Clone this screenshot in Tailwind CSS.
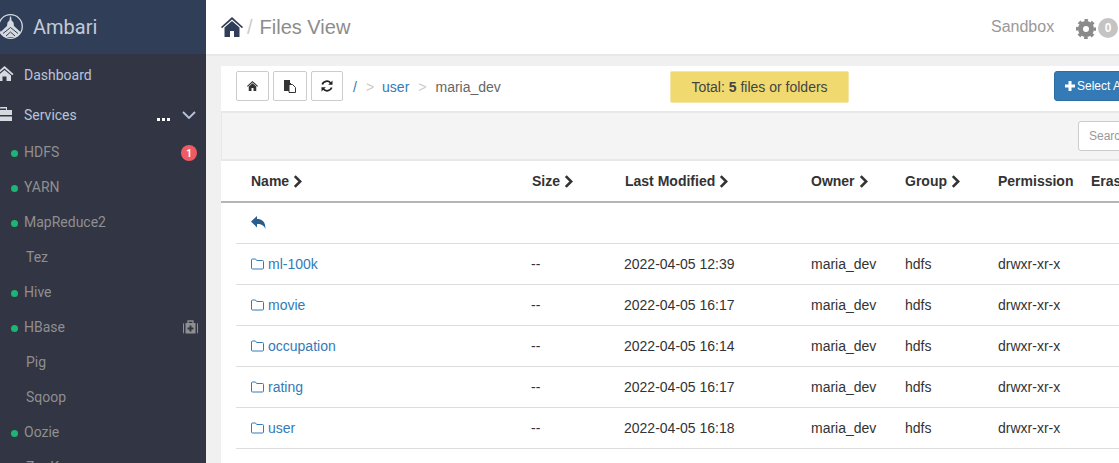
<!DOCTYPE html>
<html lang="en">
<head>
    <meta charset="UTF-8">
    <title>Ambari - Files View</title>
    <script src="https://cdn.jsdelivr.net/npm/@tailwindcss/browser@4"></script>
</head>
<body class="overflow-hidden">
<div class="flex w-[1119px] h-[463px] overflow-hidden bg-[#f0f0f0] font-['Liberation_Sans',sans-serif] text-[14px] text-[#333]">

    <!-- sidebar -->
    <aside class="w-[206px] shrink-0 bg-[#323544] font-['Roboto',sans-serif] overflow-hidden">
        <div class="h-[54px] bg-[#303e57] flex items-center pl-[33px] relative">
            <svg class="absolute left-[-3px] top-[13px]" width="27" height="27" viewBox="0 0 27 27">
                <circle cx="13.500" cy="13.500" r="11.800" fill="none" stroke="#d5d9e0" stroke-width="1.300"/>
                <path d="M13 3.500h1l.6 4 1.900 2 .5 3.500 7 6.500-4 4.500H7l-4-4.500 7-6.500.5-3.500 1.900-2z" fill="#d5d9e0"/>
                <path d="M6 20.500l7.500-6 7.500 6M9 23l4.500-4 4.500 4" fill="none" stroke="#303e57" stroke-width="1"/>
            </svg>
            <span class="text-[20px] text-[#c3cad6]">Ambari</span>
        </div>
        <div class="h-[42px] flex items-center pl-[24px] relative text-[#b8c4da]">
            <svg class="absolute left-[-5px] top-[11px]" width="19" height="17" viewBox="0 0 19 17" fill="#d5d9e0"><path d="M9.500 1L18.500 9l-1.200 1.200L9.500 3.500 1.700 10.200.5 9zM3 10.500l6.500-5.500 6.500 5.500V16h-4.500v-4.500h-4V16H3z"/></svg>
            Dashboard
        </div>
        <div class="h-[39px] flex items-center pl-[24px] relative text-[#b8c4da]">
            <svg class="absolute left-[-5px] top-[10px]" width="19" height="17" viewBox="0 0 19 17" fill="#d5d9e0"><path d="M6 1h6v3h5v5H0V4h3V1.500zM5 2.500V4h6V2.500zM0 10.500h17V15H0z"/></svg>
            Services
            <span class="absolute left-[157px] top-[22px] flex gap-[2px]"><i class="w-[3px] h-[3px] bg-white"></i><i class="w-[3px] h-[3px] bg-white"></i><i class="w-[3px] h-[3px] bg-white"></i></span>
            <svg class="absolute left-[182px] top-[15px]" width="14" height="9" viewBox="0 0 14 9" fill="none" stroke="#b8c4da" stroke-width="1.800"><path d="M1 1l6 6 6-6"/></svg>
        </div>
        <ul class="text-[#8f8f8f]">
            <li class="h-[35px] flex items-center pl-[24px] relative">
                <i class="absolute left-[11px] top-[15px] w-[7px] h-[7px] rounded-full bg-[#1eb475]"></i>HDFS
                <span class="absolute left-[181px] top-[10px] w-4 h-4 rounded-full bg-[#ef5b63] text-white text-[10px] font-bold flex items-center justify-center">1</span>
            </li>
            <li class="h-[35px] flex items-center pl-[24px] relative"><i class="absolute left-[11px] top-[15px] w-[7px] h-[7px] rounded-full bg-[#1eb475]"></i>YARN</li>
            <li class="h-[35px] flex items-center pl-[24px] relative"><i class="absolute left-[11px] top-[15px] w-[7px] h-[7px] rounded-full bg-[#1eb475]"></i>MapReduce2</li>
            <li class="h-[35px] flex items-center pl-[26px]">Tez</li>
            <li class="h-[35px] flex items-center pl-[24px] relative"><i class="absolute left-[11px] top-[15px] w-[7px] h-[7px] rounded-full bg-[#1eb475]"></i>Hive</li>
            <li class="h-[35px] flex items-center pl-[24px] relative">
                <i class="absolute left-[11px] top-[15px] w-[7px] h-[7px] rounded-full bg-[#1eb475]"></i>HBase
                <svg class="absolute left-[183px] top-[10px]" width="15" height="14" viewBox="0 0 15 14"><path d="M5 3V1h5v2" fill="none" stroke="#8f8f8f" stroke-width="1.300"/><path d="M0 4.500Q0 3 1 3v10.500q-1 0-1-1.500zM2.500 3h10v10.500h-10zM14 3q1 0 1 1.500V12q0 1.500-1 1.500z" fill="#8f8f8f"/><path d="M6.500 5.500h2v2h2v2h-2v2h-2v-2h-2v-2h2z" fill="#323544"/></svg>
            </li>
            <li class="h-[35px] flex items-center pl-[26px]">Pig</li>
            <li class="h-[35px] flex items-center pl-[26px]">Sqoop</li>
            <li class="h-[35px] flex items-center pl-[24px] relative"><i class="absolute left-[11px] top-[15px] w-[7px] h-[7px] rounded-full bg-[#1eb475]"></i>Oozie</li>
            <li class="h-[35px] flex items-center pl-[26px]">ZooKeeper</li>
        </ul>
    </aside>

    <!-- main -->
    <main class="flex-1 min-w-0">
        <header class="h-[56px] bg-white border-b-2 border-[#e8e8e8] flex items-center pl-[15px] relative">
            <svg width="22" height="20" viewBox="0 0 22 20" fill="#303e57"><path d="M11 0l11 10-1 1.300L11 2.500 1 11.300 0 10z"/><path d="M3.500 10.500L11 4l7.500 6.500V20H13v-6H9v6H3.500z"/></svg>
            <span class="text-[#ccc] text-[20px] ml-[4px]">/</span>
            <span class="text-[20px] text-[#8c8c8c] ml-[7px]">Files View</span>
            <span class="absolute left-[785px] top-[15px] text-[16px] text-[#999]">Sandbox</span>
            <svg class="absolute left-[870px] top-[19px]" width="20" height="20" viewBox="0 0 20 20" fill="none" stroke="#8a8a8a">
                <circle cx="10" cy="10" r="5.500" stroke-width="5"/>
                <circle cx="10" cy="10" r="8.700" stroke-width="2.600" stroke-dasharray="3.600 3.230" stroke-dashoffset="1.800"/>
            </svg>
            <span class="absolute left-[892px] top-[18px] w-5 h-5 rounded-full bg-[#c4c4c4] text-white text-[12px] font-bold flex items-center justify-center">0</span>
        </header>

        <section class="mt-[10px] ml-[15px] bg-white h-[397px] w-[920px]">
            <!-- toolbar -->
            <div class="h-[47px] flex items-start pt-[5px] pl-[15px] relative border-b-2 border-[#e8e8e8]">
                <button class="w-[33px] h-[30px] border border-[#ccc] rounded-[2px] flex items-center justify-center">
                    <svg width="11" height="10" viewBox="0 0 22 20" fill="#333"><path d="M11 0l11 10-1.500 1.700L11 3 1.500 11.700 0 10z"/><path d="M3.500 11L11 4.500l7.500 6.500v9H13v-6H9v6H3.500z"/></svg>
                </button>
                <button class="w-[34px] h-[30px] border border-[#ccc] rounded-[2px] flex items-center justify-center ml-[4px]">
                    <svg width="12" height="13" viewBox="0 0 12 13"><path d="M0 0h6v3h1v8H0z" fill="#333"/><path d="M5 4.500h3.500L11.500 7.500V12.500H5z" fill="#fff" stroke="#333"/></svg>
                </button>
                <button class="w-[32px] h-[30px] border border-[#ccc] rounded-[2px] flex items-center justify-center ml-[4px]">
                    <svg width="12" height="12" viewBox="0 0 12 12" fill="none" stroke="#222" stroke-width="1.800"><path d="M1.300 4.500A4.800 4.800 0 0 1 9.600 3"/><path d="M10.700 7.500A4.800 4.800 0 0 1 2.400 9"/><path d="M11.500 0.500v4.300H7.200z" fill="#222" stroke="none"/><path d="M0.500 11.500V7.200h4.300z" fill="#222" stroke="none"/></svg>
                </button>
                <div class="h-[32px] flex items-center">
                    <span class="ml-[10px] text-[#337ab7]">/</span>
                    <span class="ml-[9px] text-[#ccc]">&gt;</span>
                    <span class="ml-[8px] text-[#337ab7]">user</span>
                    <span class="ml-[9px] text-[#ccc]">&gt;</span>
                    <span class="ml-[9px] text-[#666]">maria_dev</span>
                </div>
                <div class="absolute left-[449px] top-[5px] w-[179px] h-[32px] rounded-[2px] bg-[#f0da70] border border-[#f5e6a8] flex items-center justify-center text-[#444]"><span>Total: <b>5</b> files or folders</span></div>
                <button class="absolute left-[833px] top-[5px] w-[100px] h-[30px] bg-[#337ab7] border border-[#2e6da4] rounded-[3px] text-white text-[12px] whitespace-nowrap text-left pl-[10px] overflow-hidden">
                    <span class="inline-flex items-center gap-[2px]"><svg width="10" height="10" viewBox="0 0 10 10" fill="#fff"><path d="M3.500 0h3v3.500H10v3H6.500V10h-3V6.500H0v-3h3.500z"/></svg>Select All</span>
                </button>
            </div>
            <!-- search bar -->
            <div class="h-[48px] bg-[#f4f4f4] border-b-2 border-[#e8e8e8] border-l border-l-[#e8e8e8] relative">
                <input class="absolute left-[856px] top-[8px] w-[100px] h-[30px] bg-white border border-[#ccc] rounded-[3px] pl-[10px] text-[12px] placeholder:text-[#999]" placeholder="Search">
            </div>
            <!-- table -->
            <div class="h-[42px] border-b-2 border-[#b5b5b5] grid grid-cols-[296px_93px_186px_94px_93px_93px_100px] items-center font-bold text-[#333]">
                <span class="pl-[30px] flex items-center gap-[4px]">Name <svg width="9" height="13" viewBox="0 0 8 12" fill="none" stroke="#333" stroke-width="2.400"><path d="M1.500 1l5 5-5 5"/></svg></span>
                <span class="pl-[15px] flex items-center gap-[4px]">Size <svg width="9" height="13" viewBox="0 0 8 12" fill="none" stroke="#333" stroke-width="2.400"><path d="M1.500 1l5 5-5 5"/></svg></span>
                <span class="pl-[15px] flex items-center gap-[4px] whitespace-nowrap">Last Modified <svg width="9" height="13" viewBox="0 0 8 12" fill="none" stroke="#333" stroke-width="2.400"><path d="M1.500 1l5 5-5 5"/></svg></span>
                <span class="pl-[15px] flex items-center gap-[4px]">Owner <svg width="9" height="13" viewBox="0 0 8 12" fill="none" stroke="#333" stroke-width="2.400"><path d="M1.500 1l5 5-5 5"/></svg></span>
                <span class="pl-[15px] flex items-center gap-[4px]">Group <svg width="9" height="13" viewBox="0 0 8 12" fill="none" stroke="#333" stroke-width="2.400"><path d="M1.500 1l5 5-5 5"/></svg></span>
                <span class="pl-[15px]">Permission</span>
                <span class="pl-[15px]">Erase</span>
            </div>
            <div class="ml-[15px]">
                <div class="h-[41px] border-b border-[#ddd] flex items-center pl-[15px] pb-[2px]">
                    <svg width="15" height="13" viewBox="0 0 15 13" fill="#2a5d8c"><path d="M6 0v3c5 0 8.500 2.500 8.500 10-1.500-3.500-3.500-5-8.500-5v3.500L0 5.500z"/></svg>
                </div>
                <div class="h-[41px] border-b border-[#ddd] grid grid-cols-[280px_93px_187px_94px_93px_93px] items-center">
                    <a class="pl-[15px] flex items-center gap-[4px] text-[#337ab7]"><svg width="13" height="12" viewBox="0 0 13 12" fill="none" stroke="#337ab7"><path d="M.5 10V2q0-1 1-1h3l1.200 1.500H11.500q1 0 1 1V10q0 1-1 1h-10q-1 0-1-1z"/></svg>ml-100k</a>
                    <span class="pl-[15px]">--</span><span class="pl-[15px]">2022-04-05 12:39</span><span class="pl-[15px]">maria_dev</span><span class="pl-[15px]">hdfs</span><span class="pl-[15px]">drwxr-xr-x</span>
                </div>
                <div class="h-[41px] border-b border-[#ddd] grid grid-cols-[280px_93px_187px_94px_93px_93px] items-center">
                    <a class="pl-[15px] flex items-center gap-[4px] text-[#337ab7]"><svg width="13" height="12" viewBox="0 0 13 12" fill="none" stroke="#337ab7"><path d="M.5 10V2q0-1 1-1h3l1.200 1.500H11.500q1 0 1 1V10q0 1-1 1h-10q-1 0-1-1z"/></svg>movie</a>
                    <span class="pl-[15px]">--</span><span class="pl-[15px]">2022-04-05 16:17</span><span class="pl-[15px]">maria_dev</span><span class="pl-[15px]">hdfs</span><span class="pl-[15px]">drwxr-xr-x</span>
                </div>
                <div class="h-[41px] border-b border-[#ddd] grid grid-cols-[280px_93px_187px_94px_93px_93px] items-center">
                    <a class="pl-[15px] flex items-center gap-[4px] text-[#337ab7]"><svg width="13" height="12" viewBox="0 0 13 12" fill="none" stroke="#337ab7"><path d="M.5 10V2q0-1 1-1h3l1.200 1.500H11.500q1 0 1 1V10q0 1-1 1h-10q-1 0-1-1z"/></svg>occupation</a>
                    <span class="pl-[15px]">--</span><span class="pl-[15px]">2022-04-05 16:14</span><span class="pl-[15px]">maria_dev</span><span class="pl-[15px]">hdfs</span><span class="pl-[15px]">drwxr-xr-x</span>
                </div>
                <div class="h-[41px] border-b border-[#ddd] grid grid-cols-[280px_93px_187px_94px_93px_93px] items-center">
                    <a class="pl-[15px] flex items-center gap-[4px] text-[#337ab7]"><svg width="13" height="12" viewBox="0 0 13 12" fill="none" stroke="#337ab7"><path d="M.5 10V2q0-1 1-1h3l1.200 1.500H11.500q1 0 1 1V10q0 1-1 1h-10q-1 0-1-1z"/></svg>rating</a>
                    <span class="pl-[15px]">--</span><span class="pl-[15px]">2022-04-05 16:17</span><span class="pl-[15px]">maria_dev</span><span class="pl-[15px]">hdfs</span><span class="pl-[15px]">drwxr-xr-x</span>
                </div>
                <div class="h-[41px] border-b border-[#ddd] grid grid-cols-[280px_93px_187px_94px_93px_93px] items-center">
                    <a class="pl-[15px] flex items-center gap-[4px] text-[#337ab7]"><svg width="13" height="12" viewBox="0 0 13 12" fill="none" stroke="#337ab7"><path d="M.5 10V2q0-1 1-1h3l1.200 1.500H11.500q1 0 1 1V10q0 1-1 1h-10q-1 0-1-1z"/></svg>user</a>
                    <span class="pl-[15px]">--</span><span class="pl-[15px]">2022-04-05 16:18</span><span class="pl-[15px]">maria_dev</span><span class="pl-[15px]">hdfs</span><span class="pl-[15px]">drwxr-xr-x</span>
                </div>
            </div>
        </section>
    </main>
</div>
</body>
</html>
